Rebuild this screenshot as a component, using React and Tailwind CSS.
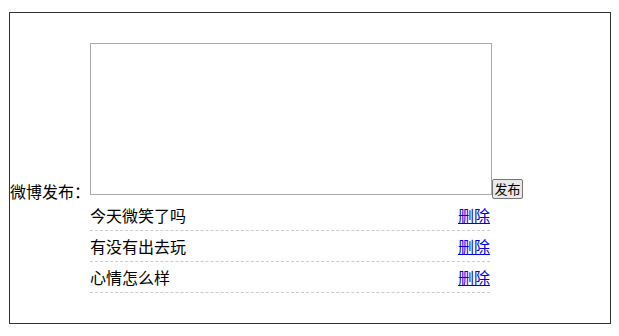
import React from 'react';

const posts = ['今天微笑了吗', '有没有出去玩', '心情怎么样'];

export default function App() {
    return (
        <div className="w-full min-h-[336px] bg-white pt-[12px] text-black" style={{ fontFamily: '"Noto Sans CJK SC", "Liberation Sans", sans-serif' }}>
            <div className="mx-auto ml-[9px] w-[602px] border border-[#333] py-[30px]">
                {/* publish row: label, textarea, button sit on one baseline */}
                <div className="flex items-end h-[157px]">
                    <span className="w-[80px] text-[16px] leading-[20px] mb-[-1px]">微博发布：</span>
                    <textarea className="w-[402px] h-[152px] border border-[#a9a9a9] bg-white mb-[5px] resize-none outline-none" />
                    <button className="w-[31px] h-[20px] border border-[#767676] rounded-[2px] bg-[#e9e9e9] text-[13px] leading-[18px] p-0 mb-[1px]">发布</button>
                </div>
                <ul className="ml-[80px] w-[400px]">
                    {posts.map((p) => (
                        <li key={p} className="flex justify-between h-[31px] leading-[30px] text-[16px] border-b border-dashed border-[#ccc]">
                            <span>{p}</span>
                            <a href="#" className="text-[#0000ee] underline">删除</a>
                        </li>
                    ))}
                </ul>
            </div>
        </div>
    );
}
